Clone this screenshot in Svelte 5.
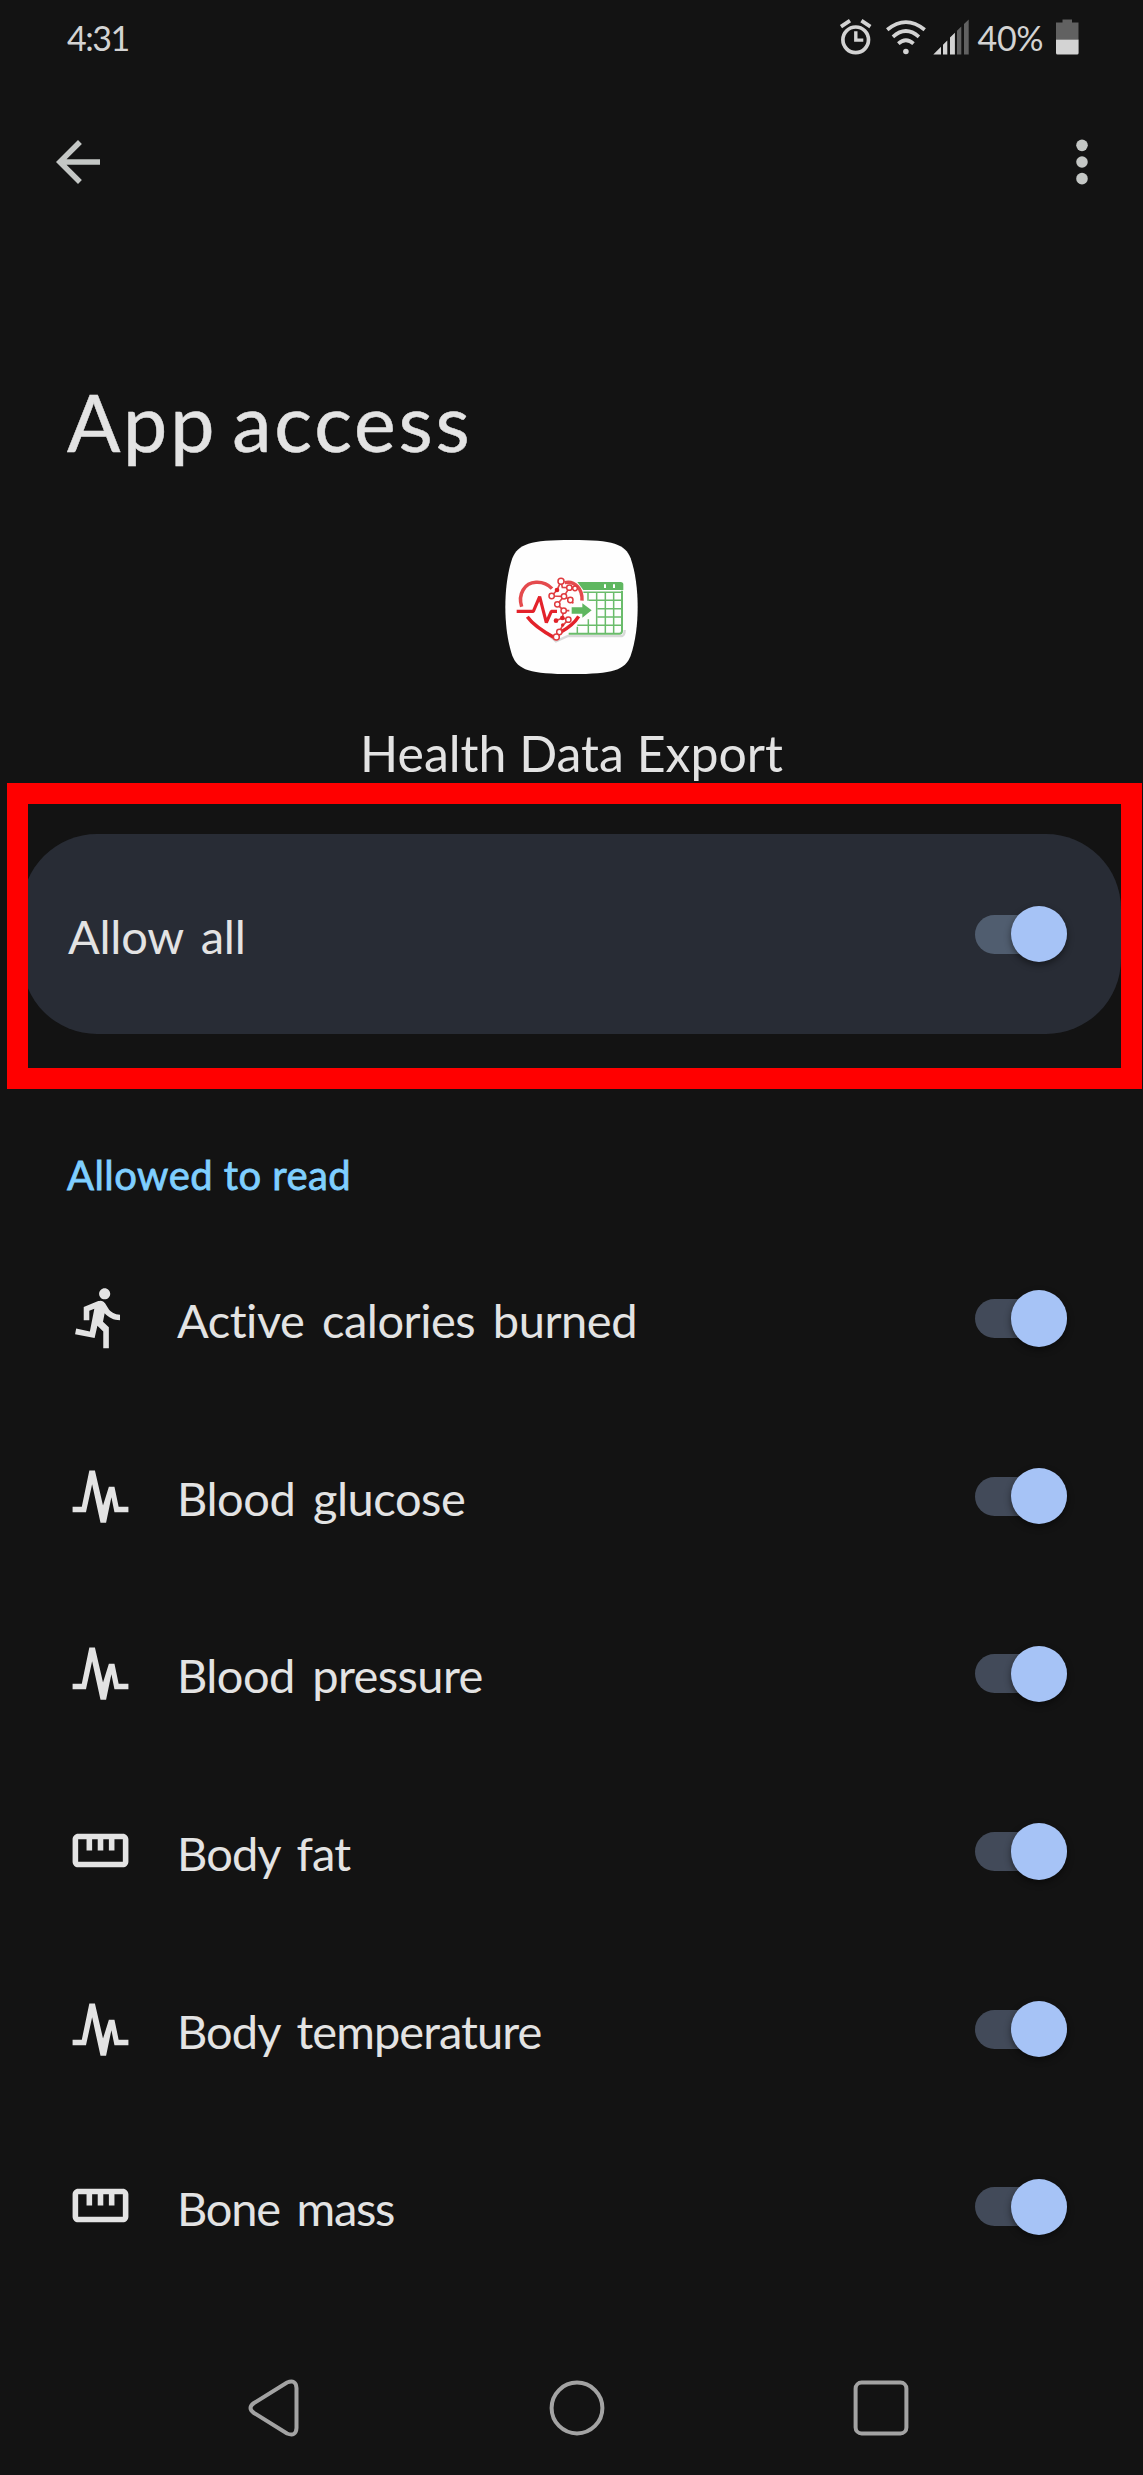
<script>
  let allowAll = true;

  let permissions = [
    { name: 'Active calories burned', icon: 'run', spacing: -0.47, allowed: true },
    { name: 'Blood glucose', icon: 'vitals', spacing: -0.45, allowed: true },
    { name: 'Blood pressure', icon: 'vitals', spacing: -0.58, allowed: true },
    { name: 'Body fat', icon: 'ruler', spacing: -0.9, allowed: true },
    { name: 'Body temperature', icon: 'vitals', spacing: -0.93, allowed: true },
    { name: 'Bone mass', icon: 'ruler', spacing: -1.25, allowed: true }
  ];

  const icons = {
    run: 'M13.49 5.48c1.1 0 2-.9 2-2s-.9-2-2-2-2 .9-2 2 .9 2 2 2zm-3.6 13.9l1-4.4 2.1 2v6h2v-7.5l-2.1-2 .6-3c1.3 1.5 3.3 2.5 5.5 2.5v-2c-1.9 0-3.5-1-4.3-2.4l-1-1.6c-.4-.6-1-1-1.7-1-.3 0-.5.1-.8.1l-5.2 2.2v4.7h2v-3.4l1.8-.7-1.6 8.1-4.9-1-.4 2 7 1.4z',
    vitals: 'M2 16H5.3L8 3H10L12.9 15.6L15 8.9H17L18.5 16H22V18H17L15.9 12.6L14 21.8H12L9 8L6.8 18H2Z',
    ruler: 'M20 6H4c-1.1 0-2 .9-2 2v8c0 1.1.9 2 2 2h16c1.1 0 2-.9 2-2V8c0-1.1-.9-2-2-2zM20 16H4V8h3v4h2V8h2v4h2V8h2v4h2V8h3z'
  };

  function toggleAll() {
    allowAll = !allowAll;
    permissions = permissions.map((p) => ({ ...p, allowed: allowAll }));
  }
</script>

<div class="screen">
  <div class="status">
    <span class="time">4:31</span>
    <div class="indicators">
      <svg class="alarm" width="33" height="36" viewBox="839 18.5 33 36" fill="none" stroke="#d3d3d3">
        <circle cx="855.7" cy="39.3" r="12.8" stroke-width="3.7" />
        <path d="M855.8 30.8V39.6H863.3" stroke-width="3.4" />
        <path d="M841 26.2L850 20.2M870.4 26.2L861.4 20.2" stroke-width="3.8" />
      </svg>
      <svg class="wifi" width="42" height="36" viewBox="885.5 18.5 42 36" fill="none" stroke="#d3d3d3" stroke-width="3.7">
        <path d="M887.7 29.3Q906.4 14 925.2 29.3" />
        <path d="M893.4 36.3Q906.4 24.8 919.4 36.3" />
        <path d="M898.8 43.2Q906.4 36.4 914 43.2" />
        <circle cx="906.4" cy="51" r="2.8" fill="#d3d3d3" stroke="none" />
      </svg>
      <svg class="signal" width="36" height="36" viewBox="933 18.5 36 36">
        <path d="M933.3 54L941 46.2V54ZM943 54V44.3L947.3 40V54ZM950 54V37L954.9 32.3V54Z" fill="#d3d3d3" />
        <path d="M957 54V30.2L961.3 26V54ZM964 54V23.4L968.7 19V54Z" fill="#616161" />
      </svg>
      <span class="percent">40%</span>
      <svg class="battery" width="23" height="36" viewBox="1056 18.5 23 36">
        <path d="M1062.5 19H1072V22H1078.5V39H1056V22H1062.5Z" fill="#616161" />
        <path d="M1056 39H1078.6V52.5Q1078.6 54 1077 54H1057.6Q1056 54 1056 52.5Z" fill="#d3d3d3" />
      </svg>
    </div>
  </div>

  <header class="appbar">
    <button aria-label="Back">
      <svg width="66" height="66" viewBox="0 0 24 24" fill="#c4c7c5">
        <path d="M20 11H7.83l5.59-5.59L12 4l-8 8 8 8 1.41-1.41L7.83 13H20v-2z" />
      </svg>
    </button>
    <button aria-label="More options">
      <svg width="66" height="66" viewBox="0 0 24 24" fill="#c4c7c5">
        <circle cx="12" cy="5.95" r="2.1" />
        <circle cx="12" cy="12" r="2.1" />
        <circle cx="12" cy="18.05" r="2.1" />
      </svg>
    </button>
  </header>

  <h1>App access</h1>

  <div class="app">
    <svg width="133" height="134" viewBox="45 30 399 402">
      <path d="M245 30C370 30 405 42 422 85C450 165 450 297 422 377C405 420 370 432 245 432C120 432 84 420 67 377C39 297 39 165 67 85C84 42 120 30 245 30Z" fill="#fefefe" />
      <!-- shadow below the heart and the sheet -->
      <path d="M112 262L198 334L234 318H396Q404 316 404 300" fill="none" stroke="#d9d9d9" stroke-width="7" />
      <g fill="none" stroke="#6abc6b" stroke-width="4.5">
        <path d="M396 182V303Q396 311 388 311H236" stroke-width="6" />
        <path d="M294 188V212M320 188V311M346 188V311M371 188V311M295 268V311M262 290V311" />
        <path d="M280 187H398M296 211H398M322 236H398M322 261H398M262 286H398" />
      </g>
      <path d="M262 156H392Q400 156 400 164V180H280Z" fill="#5fb760" />
      <path d="M342 163H348V174H342ZM369 163H375V174H369Z" fill="#fff" />
      <g fill="none" stroke="#e3222a" stroke-width="10.5">
        <path d="M95 230C83 193 104 158 138 157C158 156 174 163 186 176" stroke="#e44a4d" />
        <path d="M224 158C255 151 278 177 276 212" stroke="#e44a4d" />
        <path d="M112 260Q132 289 195 324" />
        <path d="M214 305Q250 285 266 259" />
        <path d="M80 244H130L149 200L169 278L184 244H201" stroke-width="9.5" stroke-linejoin="bevel" />
      </g>
      <g fill="none" stroke="#df4548" stroke-width="5">
        <path d="M213 154L201 180L185 198M213 154L217 172L238 173L255 175M238 173L222 199L202 223M185 198L222 199L241 210L250 220M202 223L221 242H238M221 242L217 264L198 272M217 264L235 269L217 288L208 306L199 321" />
      </g>
      <g fill="#fff" stroke="#df3a3e" stroke-width="4.5">
        <circle cx="213" cy="154" r="9" />
        <circle cx="185" cy="198" r="8" />
        <circle cx="238" cy="173" r="8" />
        <circle cx="255" cy="175" r="7" />
        <circle cx="222" cy="199" r="8" />
        <circle cx="202" cy="223" r="8" />
        <circle cx="241" cy="210" r="8" />
        <circle cx="221" cy="242" r="8" />
        <circle cx="235" cy="269" r="8" />
        <circle cx="208" cy="306" r="8" />
        <circle cx="199" cy="321" r="9" />
      </g>
      <g fill="#df2228">
        <circle cx="201" cy="180" r="7" />
        <circle cx="198" cy="272" r="7" />
        <circle cx="217" cy="264" r="7" />
        <circle cx="218" cy="285" r="5" />
      </g>
      <path d="M245 232H277V220L305 241L277 263V251H245Z" fill="#5fb760" />
    </svg>
    <p class="app-name">Health Data Export</p>
  </div>

  <div class="allow-all">
    <span class="label">Allow all</span>
    <button class="switch light" class:on={allowAll} aria-label="Allow all" on:click={toggleAll}>
      <span class="thumb"></span>
    </button>
    <div class="highlight"></div>
  </div>

  <h2>Allowed to read</h2>

  <div class="list">
    {#each permissions as permission}
      <div class="row">
        <svg class="icon" width="67" height="67" viewBox="0 0 24 24" fill="#e3e3e3">
          <path d={icons[permission.icon]} />
        </svg>
        <span class="label" style="letter-spacing: {permission.spacing}px">{permission.name}</span>
        <button
          class="switch"
          class:on={permission.allowed}
          aria-label={permission.name}
          on:click={() => (permission.allowed = !permission.allowed)}
        >
          <span class="thumb"></span>
        </button>
      </div>
    {/each}
  </div>

  <nav>
    <svg width="60" height="60" viewBox="0 0 60 60">
      <path d="M8 25L41 4.5Q50 1 50.5 10V50Q50 59 41 55.5L8 35Q1 30 8 25Z" />
    </svg>
    <svg width="60" height="60" viewBox="0 0 60 60">
      <circle cx="30" cy="30" r="25.4" />
    </svg>
    <svg width="60" height="60" viewBox="0 0 60 60">
      <rect x="4.6" y="4.6" width="50.8" height="50.8" rx="6" />
    </svg>
  </nav>
</div>

<style>
  :global(body) {
    background: #131313;
  }

  .screen {
    display: flex;
    flex-direction: column;
    width: 1143px;
    height: 2475px;
    overflow: hidden;
    background: #131313;
    color: #e3e3e3;
    font-family: Lato, "Open Sans", sans-serif;
  }

  h1, h2, p {
    margin: 0;
    font-weight: 400;
  }

  button {
    display: block;
    padding: 0;
    border: 0;
    background: none;
  }

  svg {
    display: block;
    flex: none;
  }

  .status {
    display: flex;
    align-items: center;
    justify-content: space-between;
    height: 75px;
    padding: 0 64.5px 0 67px;
    color: #d3d3d3;
    font-size: 34px;
  }

  .time {
    letter-spacing: -1.5px;
  }

  .indicators {
    display: flex;
    align-items: center;
  }

  .indicators svg {
    margin-bottom: 2px;
  }

  .wifi {
    margin-left: 13.5px;
  }

  .signal {
    margin-left: 5.5px;
  }

  .percent {
    width: 78px;
    margin-left: 9px;
    letter-spacing: -0.3px;
  }

  .appbar {
    display: flex;
    align-items: center;
    justify-content: space-between;
    height: 174px;
    padding: 0 28px 0 45px;
  }

  h1 {
    height: 100px;
    margin-top: 123px;
    padding-left: 67px;
    font-size: 79px;
    line-height: 100px;
    letter-spacing: 2.8px;
    word-spacing: -8px;
    -webkit-text-stroke: 0.5px #e3e3e3;
  }

  .app {
    display: flex;
    flex-direction: column;
    align-items: center;
    margin-top: 68px;
  }

  .app-name {
    margin-top: 49px;
    font-size: 50px;
    line-height: 60px;
  }

  .allow-all {
    position: relative;
    display: flex;
    align-items: center;
    box-sizing: border-box;
    height: 200px;
    margin: 51px 22px 0;
    padding: 0 54px 0 46px;
    border-radius: 75px;
    background: #282c35;
  }

  .label {
    flex: 1;
    padding-top: 3px;
    font-size: 47px;
    word-spacing: 6px;
  }

  .allow-all .label {
    padding-top: 4px;
    letter-spacing: -0.25px;
  }

  .highlight {
    position: absolute;
    top: -51px;
    left: -15px;
    box-sizing: border-box;
    width: 1135px;
    height: 306px;
    border: 21px solid #ff0000;
    pointer-events: none;
  }

  h2 {
    margin-top: 117px;
    padding-left: 67px;
    color: #7fcfff;
    font-size: 40px;
    line-height: 48px;
    letter-spacing: 0.45px;
    -webkit-text-stroke: 0.8px #7fcfff;
  }

  .list {
    margin-top: 30.5px;
  }

  .row {
    display: flex;
    align-items: center;
    height: 177.72px;
    padding: 0 76px 0 66.5px;
  }

  .icon {
    margin: 0 43.5px 2px 0;
  }

  .switch {
    display: flex;
    align-items: center;
    width: 92px;
    height: 39px;
    border-radius: 20px;
    background: #3a3d42;
  }

  .switch.on {
    justify-content: flex-end;
    background: #424a59;
  }

  .switch.light.on {
    background: #505d6f;
  }

  .thumb {
    flex: none;
    width: 56.5px;
    height: 56.5px;
    border-radius: 50%;
    background: #a6c3f6;
    box-shadow: 0 3px 7px rgba(0, 0, 0, 0.45);
  }

  nav {
    display: flex;
    align-items: center;
    justify-content: space-between;
    height: 134px;
    margin-top: auto;
    padding: 0 232px 0 246px;
  }

  nav svg {
    fill: none;
    stroke: #a3a3a3;
    stroke-width: 4;
  }

  nav svg:nth-child(2) {
    margin-right: 3px;
  }
</style>
